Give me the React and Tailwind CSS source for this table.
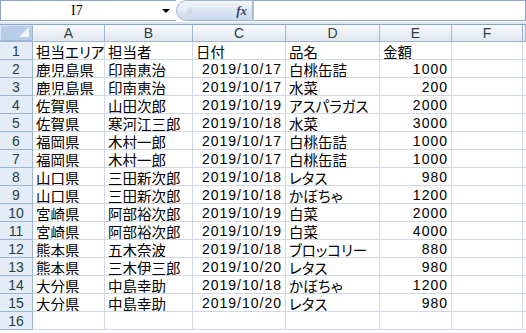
import React from "react";

const cols = ["A", "B", "C", "D", "E", "F", ""];

const rows = [
  ["担当エリア", "担当者", "日付", "品名", "金額"],
  ["鹿児島県", "印南恵治", "2019/10/17", "白桃缶詰", "1000"],
  ["鹿児島県", "印南恵治", "2019/10/17", "水菜", "200"],
  ["佐賀県", "山田次郎", "2019/10/19", "アスパラガス", "2000"],
  ["佐賀県", "寒河江三郎", "2019/10/18", "水菜", "3000"],
  ["福岡県", "木村一郎", "2019/10/17", "白桃缶詰", "1000"],
  ["福岡県", "木村一郎", "2019/10/17", "白桃缶詰", "1000"],
  ["山口県", "三田新次郎", "2019/10/18", "レタス", "980"],
  ["山口県", "三田新次郎", "2019/10/18", "かぼちゃ", "1200"],
  ["宮崎県", "阿部裕次郎", "2019/10/19", "白菜", "2000"],
  ["宮崎県", "阿部裕次郎", "2019/10/19", "白菜", "4000"],
  ["熊本県", "五木奈波", "2019/10/18", "ブロッコリー", "880"],
  ["熊本県", "三木伊三郎", "2019/10/20", "レタス", "980"],
  ["大分県", "中島幸助", "2019/10/18", "かぼちゃ", "1200"],
  ["大分県", "中島幸助", "2019/10/20", "レタス", "980"],
  ["", "", "", "", ""],
];

const gridCols = "grid grid-cols-[33px_72px_88px_93px_94px_72px_71px_1fr]";

function FormulaBar() {
  return (
    <div className="flex h-[21px] bg-white">
      <div className="relative w-[176px] border border-[#8aa4c8] border-r-0 flex items-center pl-[70px] text-[14px] text-black font-['Liberation_Serif',serif]">
        I7
        <span className="absolute right-[6px] top-[8px] w-0 h-0 border-l-[4px] border-r-[4px] border-t-[4px] border-l-transparent border-r-transparent border-t-black" />
      </div>
      <div className="relative w-[77px] h-[21px] rounded-l-full rounded-r-[3px] border border-[#9fb3cd] bg-gradient-to-b from-[#f4f8fc] via-[#dde7f3] to-[#c9d8ea] flex items-center">
        <span className="ml-[6px] w-[9px] h-[9px] rounded-full bg-gradient-to-br from-[#ffffff] to-[#b9c6d6]" />
        <span className="ml-auto mr-[5px] text-[13px] italic font-bold text-[#3d4a5c] font-['Liberation_Serif',serif]">fx</span>
      </div>
      <div className="flex-1 border border-[#8aa4c8] border-l-[#b6c6dc]" />
    </div>
  );
}

export default function App() {
  return (
    <div className="w-[526px] h-[333px] overflow-hidden bg-white font-['Noto_Sans_CJK_JP','Noto_Sans',sans-serif] text-black">
      <FormulaBar />
      <div className="h-[4px] border-t border-white border-b border-b-[#8aa4c8] bg-[#dbe5f1]" />
      <div className={`${gridCols} h-[17px] border-b border-[#9eb6ce]`}>
        <div className="relative bg-[#b8cdea] border-r border-[#9eb6ce] border-[1px] border-t-[#dce8f7] border-l-[#dce8f7]">
          <span className="absolute right-[3px] bottom-[3px] w-0 h-0 border-l-[10px] border-t-[10px] border-l-transparent border-t-transparent" style={{ borderBottomWidth: 0, borderRightWidth: 10, borderRightColor: "#eef4fc" }} />
        </div>
        {cols.map((c, i) => (
          <div
            key={i}
            className="border-r border-[#9eb6ce] bg-gradient-to-b from-[#f7f9fc] to-[#e1e7ef] flex items-center justify-center text-[14px] leading-none text-[#27413e] font-['Liberation_Sans',sans-serif]"
          >
            {c}
          </div>
        ))}
      </div>
      {rows.map((r, ri) => (
        <div key={ri} className={`${gridCols} h-[18px]`}>
          <div className="bg-[#e4ecf7] border-r border-b border-[#9eb6ce] flex items-end justify-center pb-[1px] text-[14px] leading-none text-[#27413e] font-['Liberation_Sans',sans-serif]">
            {ri + 1}
          </div>
          {[0, 1, 2, 3, 4, 5, 6].map((ci) => {
            const v = r[ci] || "";
            const right = /^[0-9/]+$/.test(v);
            return (
              <div
                key={ci}
                className={`border-r border-b border-[#d0d7e5] flex items-end overflow-hidden whitespace-nowrap leading-none ${right ? "justify-end pr-[3px] pb-[1px] text-[14px] font-['Liberation_Sans',sans-serif] tracking-[1px]" : "pl-[3px] text-[14.5px] [font-feature-settings:'palt']"}`}
              >
                {v}
              </div>
            );
          })}
        </div>
      ))}
    </div>
  );
}
